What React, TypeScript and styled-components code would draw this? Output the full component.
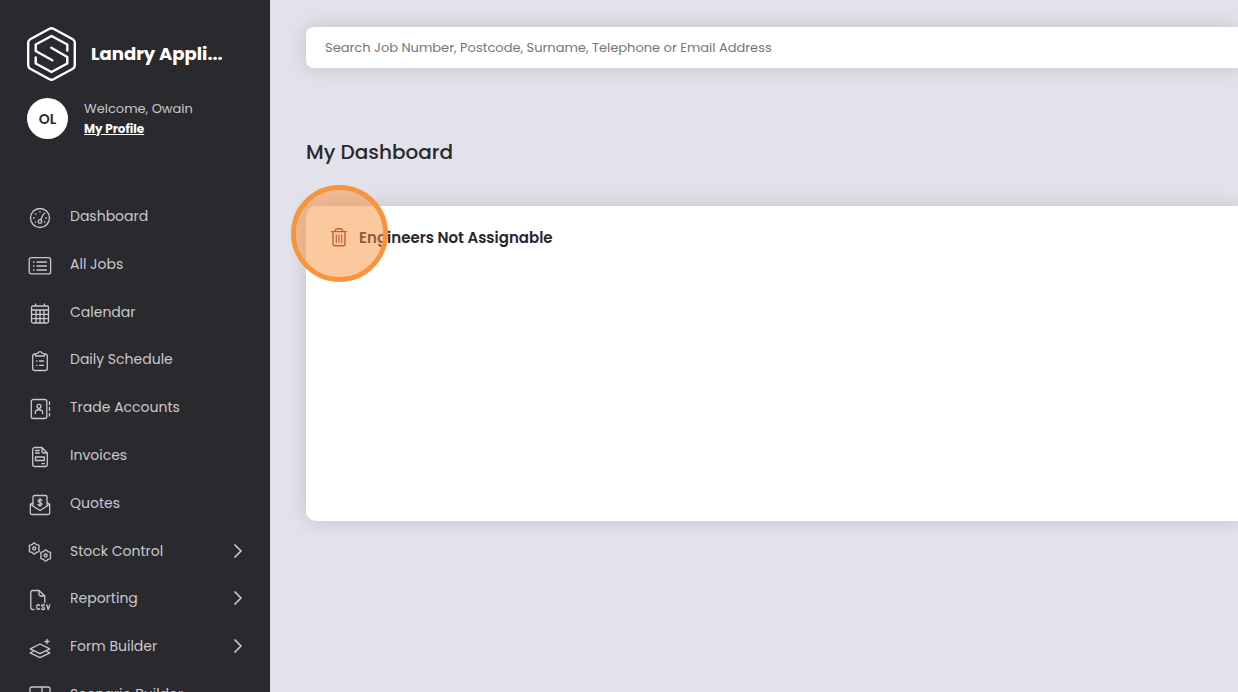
import React from "react";
import styled, { createGlobalStyle } from "styled-components";

const GlobalStyle = createGlobalStyle`
  *, *::before, *::after { box-sizing: border-box; }
  body {
    margin: 0;
    background: #e3e1ea;
    color: #29282d;
    font-family: Poppins, Inter, sans-serif;
  }
`;

const Shell = styled.div`
  display: flex;
  height: 100vh;
  overflow: hidden;
`;

const Sidebar = styled.aside`
  flex: 0 0 270px;
  padding-top: 27px;
  background: #2a292e;
  color: #c9c8cd;
  overflow: hidden;
`;

const Brand = styled.div`
  display: flex;
  align-items: center;
  gap: 15px;
  padding: 0 27px;
  color: #fff;
`;

const BrandName = styled.strong`
  font-size: 18px;
  line-height: 24px;
  font-weight: 700;
  white-space: nowrap;
`;

const Profile = styled.div`
  display: flex;
  align-items: center;
  gap: 16px;
  margin-top: 17px;
  padding: 0 27px;
`;

const Avatar = styled.span`
  display: flex;
  align-items: center;
  justify-content: center;
  width: 41px;
  height: 41px;
  border-radius: 50%;
  background: #fff;
  color: #29282d;
  font-size: 14px;
  line-height: 20px;
  font-weight: 600;
`;

const Greeting = styled.div`
  display: flex;
  flex-direction: column;
  align-items: flex-start;
  font-size: 13px;
  line-height: 20px;
`;

const ProfileLink = styled.a`
  color: #fff;
  font-size: 12px;
  font-weight: 700;
`;

const Menu = styled.ul`
  display: grid;
  grid-auto-rows: 1fr;
  height: 526px;
  list-style: none;
  margin: 53px 0 0;
  padding: 0;
`;

const MenuLink = styled.a`
  display: flex;
  align-items: center;
  gap: 18px;
  height: 100%;
  padding: 0 28px;
  color: inherit;
  font-size: 14px;
  line-height: 24px;
  text-decoration: none;
`;

const MenuButton = styled(MenuLink).attrs({ as: "button" })`
  width: 100%;
  border: 0;
  background: none;
  font-family: inherit;
  text-align: left;
  cursor: pointer;
`;

const MenuLabel = styled.span`
  flex: 1;
`;

const MenuIcon = styled.svg`
  flex: none;
  width: 24px;
  height: 28px;
  padding-top: 4px;
  fill: none;
  stroke: currentColor;
  stroke-width: 1.3;
  stroke-linecap: round;
  stroke-linejoin: round;
`;

const Chevron = styled.svg`
  width: 8px;
  height: 14px;
  fill: none;
  stroke: currentColor;
  stroke-width: 1.7;
  stroke-linecap: round;
  stroke-linejoin: round;
`;

const Main = styled.main`
  flex: 1;
  min-width: 0;
  padding: 27px 0 0 36px;
`;

const SearchInput = styled.input`
  display: block;
  width: 100%;
  height: 41px;
  padding: 0 19px;
  border: 0;
  border-radius: 8px 0 0 8px;
  background: #fff;
  box-shadow: 0 0 20px rgba(0, 0, 0, 0.15);
  font-family: inherit;
  font-size: 13px;
  line-height: 20px;
  &::placeholder {
    color: #757575;
    opacity: 1;
  }
`;

const PageTitle = styled.h1`
  margin: 69px 0 39px;
  font-size: 20px;
  line-height: 30px;
  font-weight: 500;
`;

const Card = styled.section`
  position: relative;
  min-height: 315px;
  padding: 19px 24px;
  border-radius: 10px 0 0 10px;
  background: #fff;
  box-shadow: 0 0 20px rgba(0, 0, 0, 0.15);
`;

const CardHeader = styled.header`
  display: flex;
  align-items: center;
  gap: 11px;
`;

const CardTitle = styled.h2`
  margin: 0;
  font-size: 15px;
  line-height: 26px;
  font-weight: 600;
`;

const DeleteButton = styled.button`
  display: flex;
  padding: 0;
  border: 0;
  background: none;
  color: #8a2f2a;
  cursor: pointer;
`;

const ClickMarker = styled.span`
  position: absolute;
  top: -21px;
  left: -15px;
  width: 97px;
  height: 97px;
  border: 5px solid #f7943d;
  border-radius: 50%;
  background: rgba(249, 146, 60, 0.5);
  background-clip: padding-box;
  pointer-events: none;
`;

/* Six-toothed cog with rounded teeth, centred on the given point. */
const gear = (cx: number, cy: number) => {
  const points: string[] = [];
  for (let i = 0; i < 48; i += 1) {
    const a = (i / 48) * Math.PI * 2;
    const r = 5 + 0.6 * Math.cos(6 * a + Math.PI);
    points.push(`${(cx + r * Math.cos(a)).toFixed(2)} ${(cy + r * Math.sin(a)).toFixed(2)}`);
  }
  return `M${points.join("L")}Z`;
};

const icons = {
  dashboard: (
    <>
      <circle cx="12" cy="12" r="9.5" />
      <circle cx="12" cy="15.5" r="1.8" />
      <path d="M12.7 13.8 15.5 8M5.6 12h.6M17.8 12h.6M7.5 7.8l.3.3M12 5.7v.3M16.8 7.2l-.2.2M7.3 16h.3M16.6 16h.3" />
    </>
  ),
  list: (
    <>
      <rect x="1.2" y="3.7" width="21.4" height="16.2" rx="2" />
      <path d="M9 8h9.5M9 12h9.5M9 16h9.5M5.5 8h.6M5.5 12h.6M5.5 16h.6" />
    </>
  ),
  calendar: (
    <path d="M5 4h14a1.5 1.5 0 0 1 1.5 1.5v14A1.5 1.5 0 0 1 19 21H5a1.5 1.5 0 0 1-1.5-1.5v-14A1.5 1.5 0 0 1 5 4ZM3.5 8h17M3.5 12.3h17M3.5 16.6h17M8 8v13M12 8v13M16 8v13M7.5 2v2M16.5 2v2" />
  ),
  clipboard: (
    <path d="M7.5 5H6.5A2 2 0 0 0 4.7 7v12.5a2 2 0 0 0 2 2h10.6a2 2 0 0 0 2-2V7a2 2 0 0 0-1.8-2h-1M7.5 7V5l2.8-1.2a1.8 1.8 0 0 1 3.4 0L16.5 5v2ZM8.5 12h.5M11.5 12h4M8.5 16.3h.5M11.5 16.3h4" />
  ),
  contact: (
    <>
      <rect x="3.3" y="2.5" width="15.5" height="19" rx="2" />
      <circle cx="11" cy="9.3" r="2" />
      <path d="M7.3 16.5v-.7c0-4.1 7.4-4.1 7.4 0v.7M21.5 5v2.5M21.5 10.5v3M21.5 16.5V19" />
    </>
  ),
  invoice: (
    <path d="M14 2.5H6.7a2 2 0 0 0-2 2v15a2 2 0 0 0 2 2h10.6a2 2 0 0 0 2-2V8ZM14 2.5V6a2 2 0 0 0 2 2h3.3M7.5 5.5h3.7M7.5 8h3.7M7.5 12h8.8v3.5H7.5ZM14 18.6h2.5" />
  ),
  quote: (
    <path d="M5 12V4a1.5 1.5 0 0 1 1.5-1.5h11A1.5 1.5 0 0 1 19 4v8M5 9.5 2.3 11.3v8.5a1.7 1.7 0 0 0 1.7 1.7h16a1.7 1.7 0 0 0 1.7-1.7v-8.5L19 9.5M2.5 11.5 12 17.5l9.5-6M13.8 7.4c-1-1.3-3.7-1-3.7.6 0 1.9 3.9 1 3.9 3 0 1.6-3 1.9-4 .5M12 5.5v7.8" />
  ),
  gears: (
    <>
      <path d={gear(6.2, 7.5)} />
      <circle cx="6.2" cy="7.5" r="1.5" />
      <path d={gear(17.7, 14.5)} />
      <circle cx="17.7" cy="14.5" r="1.5" />
    </>
  ),
  csv: (
    <path d="M6 21.5H4.5A1.7 1.7 0 0 1 2.8 19.8V4.2a1.7 1.7 0 0 1 1.7-1.7H11L16.8 8v6.5M11 2.5v4A1.5 1.5 0 0 0 12.5 8h4.3M11.5 17.5c-.5-1.2-2.7-1-2.7.7v1.6c0 1.7 2.2 1.9 2.7.7M16.4 17.2c-.9-1-2.7-.7-2.7.5 0 1.6 2.8 1 2.8 2.7 0 1.3-2 1.5-2.9.4M18.7 16.8l1.5 4.7 1.6-4.7" />
  ),
  layers: (
    <path d="M12 8 2.2 12.8 12 17.6l9.8-4.8ZM4.8 15.5l-2.6 1.3L12 21.7l9.8-4.9-2.6-1.3M19 3.5v4M17 5.5h4" />
  ),
  layout: (
    <path d="M4 3h16a2 2 0 0 1 2 2v14a2 2 0 0 1-2 2H4a2 2 0 0 1-2-2V5a2 2 0 0 1 2-2ZM2 12h20M14 3v18" />
  ),
};

type MenuEntry = { label: string; icon: keyof typeof icons; expandable?: boolean };

const entries: MenuEntry[] = [
  { label: "Dashboard", icon: "dashboard" },
  { label: "All Jobs", icon: "list" },
  { label: "Calendar", icon: "calendar" },
  { label: "Daily Schedule", icon: "clipboard" },
  { label: "Trade Accounts", icon: "contact" },
  { label: "Invoices", icon: "invoice" },
  { label: "Quotes", icon: "quote" },
  { label: "Stock Control", icon: "gears", expandable: true },
  { label: "Reporting", icon: "csv", expandable: true },
  { label: "Form Builder", icon: "layers", expandable: true },
  { label: "Scenario Builder", icon: "layout" },
];

function MenuItem({ label, icon, expandable }: MenuEntry) {
  const content = (
    <>
      <MenuIcon viewBox="0 0 24 24" aria-hidden="true">{icons[icon]}</MenuIcon>
      <MenuLabel>{label}</MenuLabel>
      {expandable && (
        <Chevron viewBox="0 0 8 14" aria-hidden="true">
          <path d="m1 1 6 6-6 6" />
        </Chevron>
      )}
    </>
  );
  return (
    <li>
      {expandable ? <MenuButton>{content}</MenuButton> : <MenuLink href="#">{content}</MenuLink>}
    </li>
  );
}

export default function App() {
  return (
    <>
      <GlobalStyle />
      <Shell>
        <Sidebar>
          <Brand>
            <svg width="49" height="54" viewBox="0 0 49 54" fill="none" stroke="currentColor" strokeWidth="2.4" strokeLinecap="round" strokeLinejoin="round" aria-hidden="true">
              <path d="M22.5 1.8Q24.5.7 26.5 1.8L45.8 12.3Q47.8 13.5 47.8 15.7V38.3Q47.8 40.5 45.8 41.7L26.5 52.2Q24.5 53.3 22.5 52.2L3.2 41.7Q1.2 40.5 1.2 38.3V15.7Q1.2 13.5 3.2 12.3Z" />
              <path d="M40.3 23.5V17.5L24.5 9 8.7 17.5V24L25.3 33.3M24.3 20.7 40.3 30V36.5L24.5 45 8.7 36.5V30.5" />
            </svg>
            <BrandName>Landry Appli...</BrandName>
          </Brand>
          <Profile>
            <Avatar>OL</Avatar>
            <Greeting>
              <span>Welcome, Owain</span>
              <ProfileLink href="#">My Profile</ProfileLink>
            </Greeting>
          </Profile>
          <nav aria-label="Main">
            <Menu>
              {entries.map((entry) => (
                <MenuItem key={entry.label} {...entry} />
              ))}
            </Menu>
          </nav>
        </Sidebar>
        <Main>
          <SearchInput
            type="search"
            aria-label="Search jobs"
            placeholder="Search Job Number, Postcode, Surname, Telephone or Email Address"
          />
          <PageTitle>My Dashboard</PageTitle>
          <Card>
            <CardHeader>
              <DeleteButton aria-label="Remove Engineers Not Assignable">
                <svg width="18" height="20" viewBox="0 0 18 20" fill="none" stroke="currentColor" strokeWidth="1.4" strokeLinecap="round" strokeLinejoin="round" aria-hidden="true">
                  <path d="M1.5 3.6h15M3 3.6v12.2a2 2 0 0 0 2 2h8a2 2 0 0 0 2-2V3.6M5.5 3.6V2.3A1.5 1.5 0 0 1 7 .8h4a1.5 1.5 0 0 1 1.5 1.5v1.3" />
                  <path d="M6.3 6.8v8M9 6.8v8M11.7 6.8v8" strokeWidth="1.1" />
                </svg>
              </DeleteButton>
              <CardTitle>Engineers Not Assignable</CardTitle>
            </CardHeader>
            <ClickMarker />
          </Card>
        </Main>
      </Shell>
    </>
  );
}
